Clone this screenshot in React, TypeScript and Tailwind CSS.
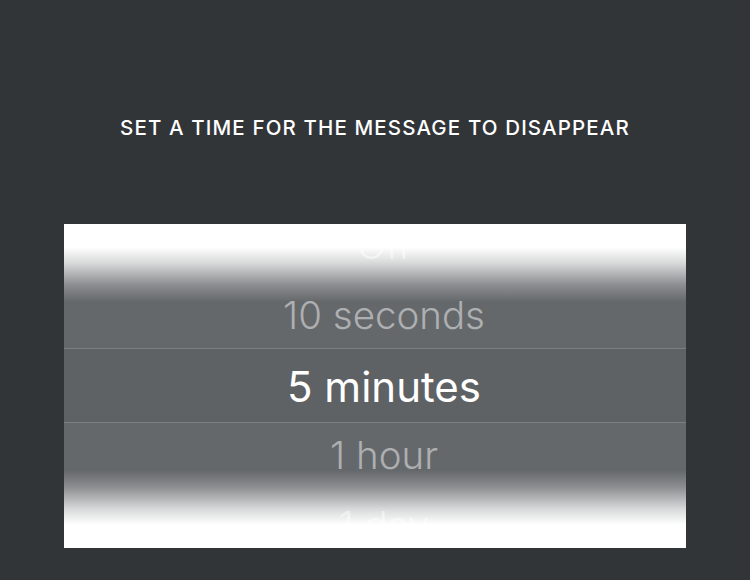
const options = ['Off', '10 seconds', '5 minutes', '1 hour', '1 day'];
const selected = '5 minutes';

export default function App() {
  return (
    <div className="min-h-[580px] w-[750px] bg-[#323538] flex flex-col items-center font-['Inter',sans-serif]">
      <h1 className="mt-[114px] text-[20.5px] leading-[28px] font-medium tracking-[0.055em] text-white">
        SET A TIME FOR THE MESSAGE TO DISAPPEAR
      </h1>

      <div className="relative mt-[82px] w-[622px] h-[324px] bg-[#65686b] overflow-hidden">
        <div className="absolute left-0 right-0 top-[124px] h-[75px] border-y border-[#7c7f82] bg-[#5f6265]" />

        <div className="relative h-full flex flex-col justify-center pl-[18px]">
          {options.map((opt) => (
            <div
              key={opt}
              className={`h-[70px] shrink-0 flex items-center justify-center ${
                opt === selected
                  ? 'text-[42px] text-white'
                  : 'text-[38.5px] font-light text-[#adafb1]'
              }`}
            >
              {opt}
            </div>
          ))}
        </div>

        <div className="absolute left-0 right-0 top-0 h-[78px] bg-[linear-gradient(to_bottom,#ffffff_0%,#ffffff_30%,rgba(255,255,255,0.75)_50%,rgba(255,255,255,0.25)_78%,rgba(255,255,255,0)_100%)] pointer-events-none" />
        <div className="absolute left-0 right-0 bottom-0 h-[78px] bg-[linear-gradient(to_top,#ffffff_0%,#ffffff_30%,rgba(255,255,255,0.75)_50%,rgba(255,255,255,0.25)_78%,rgba(255,255,255,0)_100%)] pointer-events-none" />
      </div>
    </div>
  );
}
